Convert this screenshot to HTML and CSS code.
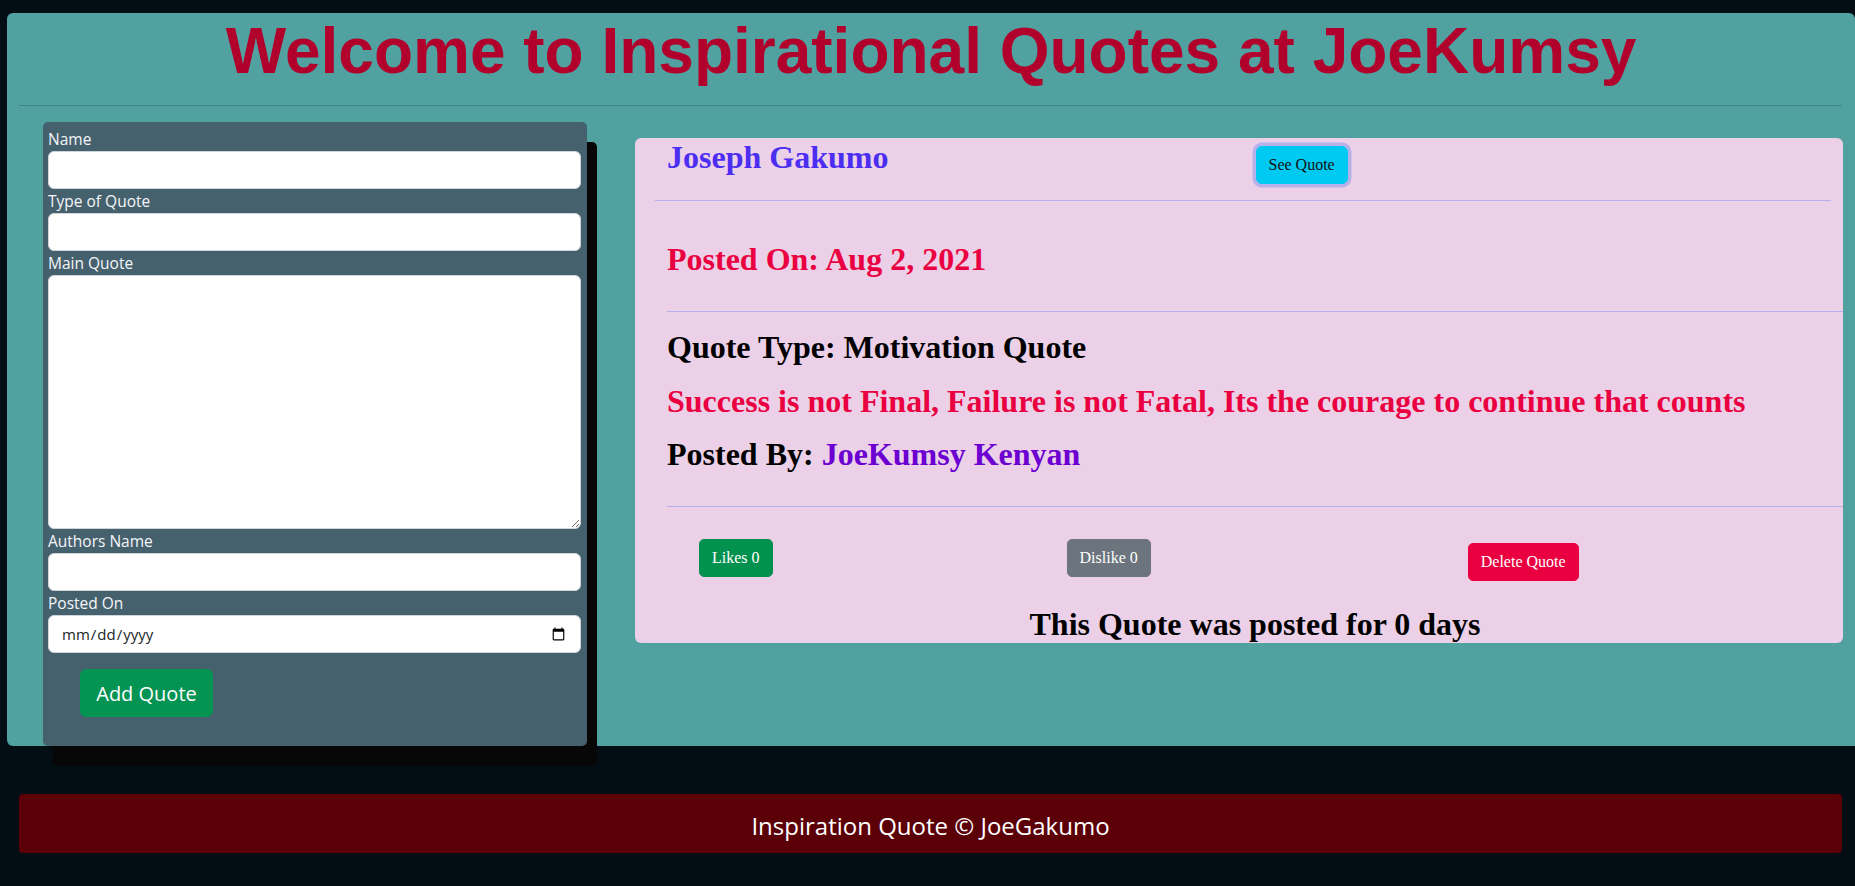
FILE: index.html
```html
<!DOCTYPE html>
<html lang="en">
<head>
<meta charset="utf-8">
<title>Inspirational Quotes</title>
<link rel="stylesheet" href="styles.css">
</head>
<body>
<div class="main">
  <h1 class="title">Welcome to Inspirational Quotes at JoeKumsy</h1>
  <hr class="top-rule">
  <div class="row">
    <form class="quote-form">
      <label class="lbl">Name</label>
      <input class="field" type="text">
      <label class="lbl">Type of Quote</label>
      <input class="field" type="text">
      <label class="lbl">Main Quote</label>
      <textarea class="field area"></textarea>
      <label class="lbl">Authors Name</label>
      <input class="field" type="text">
      <label class="lbl">Posted On</label>
      <input class="field date" type="date">
      <button class="add-btn" type="button">Add Quote</button>
    </form>
    <div class="quote-card">
      <div class="card-head">
        <div class="half"><h2 class="author">Joseph Gakumo</h2></div>
        <div class="half"><button class="see-btn" type="button">See Quote</button></div>
      </div>
      <hr class="rule head-rule">
      <div class="card-body">
        <h2 class="posted">Posted On: Aug 2, 2021</h2>
        <hr class="rule body-rule">
        <h2 class="line">Quote Type: Motivation Quote</h2>
        <h2 class="line red">Success is not Final, Failure is not Fatal, Its the courage to continue that counts</h2>
        <h2 class="line last">Posted By: <span class="purple">JoeKumsy Kenyan</span></h2>
        <hr class="rule body-rule">
        <div class="actions">
          <button class="act like" type="button">Likes 0</button>
          <button class="act dislike" type="button">Dislike 0</button>
          <button class="act delete" type="button">Delete Quote</button>
        </div>
        <h2 class="days">This Quote was posted for 0 days</h2>
      </div>
    </div>
  </div>
</div>
<footer class="footer">Inspiration Quote © JoeGakumo</footer>
</body>
</html>
```

FILE: styles.css
```css
* { box-sizing: border-box; }

body {
  margin: 0;
  padding-top: 13px;
  background: #020e14;
  font-family: "Open Sans", "Noto Sans", sans-serif;
  min-height: 886px;
}

.main {
  margin-left: 7px;
  background: #52a1a1;
  border-radius: 6px 6px 0 6px;
}

.title {
  margin: 0;
  text-align: center;
  font-family: "Liberation Sans", Arial, sans-serif;
  font-weight: 700;
  font-size: 64px;
  line-height: 77px;
  color: #b0002b;
}

.top-rule {
  margin: 15px 13px 16px 12px;
  border: 0;
  border-top: 1px solid #3f8485;
}

.row {
  display: flex;
  align-items: flex-start;
}

.quote-form {
  margin: 0 0 0 36px;
  width: 544px;
  flex: none;
  background: #46616e;
  border-radius: 5px;
  padding: 5px 6px 29px 5px;
  box-shadow: 10px 20px 0 0 #070707;
  display: flex;
  flex-direction: column;
  align-items: flex-start;
}

.lbl {
  font-size: 15.5px;
  line-height: 24px;
  color: #f4f6f8;
}

.field {
  width: 100%;
  height: 38px;
  border: 1px solid #ced4da;
  border-radius: 6px;
  background: #fff;
  padding: 6px 12px;
  font-family: "Open Sans", sans-serif;
  font-size: 15px;
  color: #212529;
  margin: 0;
}

.area {
  height: 254px;
  resize: vertical;
}

.add-btn {
  margin: 16px 0 0 32px;
  height: 48px;
  width: 133px;
  padding: 0;
  border: 1px solid #039353;
  background: #039353;
  color: #fff;
  border-radius: 6px;
  font-family: "Open Sans", sans-serif;
  font-size: 20px;
}

.quote-card {
  flex: 1;
  margin: 16px 12px 0 48px;
  background: #ebd0e8;
  border-radius: 6px;
  font-family: "Liberation Serif", "Times New Roman", serif;
  overflow: hidden;
}

.card-head {
  display: flex;
  padding: 0 11px 0 20px;
}

.half {
  flex: 1 1 0;
  padding-left: 12px;
}

h2 {
  margin: 0;
  font-size: 32px;
  line-height: 38.4px;
  font-weight: 700;
}

.author {
  color: #4b2ef2;
  margin-bottom: 8px;
}

.see-btn {
  margin-top: 8px;
  height: 38px;
  padding: 0 12px;
  background: #00caf1;
  border: 1px solid #00caf1;
  border-radius: 6px;
  box-shadow: 0 0 0 3.5px #b6b1ea;
  font-family: "Liberation Serif", serif;
  font-size: 16px;
  color: #111;
}

.rule {
  border: 0;
  border-top: 1px solid #b4b0ec;
  margin: 0;
}

.head-rule {
  margin: 16px 12px 0 20px;
}

.card-body {
  padding-left: 32px;
}

.posted {
  color: #ea0041;
  margin-top: 39px;
}

.body-rule {
  margin: 32px 0 16px;
}

.line {
  color: #000;
  margin-bottom: 15.3px;
}

.line.last { margin-bottom: 0; }

.red { color: #ea0041; }
.purple { color: #6b00d1; }

.actions {
  display: flex;
  align-items: flex-start;
  margin-top: 32px;
}

.act {
  height: 38px;
  padding: 0 12px;
  border-radius: 5px;
  font-family: "Liberation Serif", serif;
  font-size: 16px;
  color: #fff;
}

.like {
  margin-left: 32px;
  background: #03914f;
  border: 1px solid #03914f;
}

.dislike {
  margin-left: 294px;
  background: #6c757d;
  border: 1px solid #6c757d;
}

.delete {
  margin-left: 317px;
  margin-top: 4px;
  background: #ea0041;
  border: 1px solid #ea0041;
}

.days {
  margin-top: 24px;
  text-align: center;
  color: #000;
}

.footer {
  margin: 48px 13px 0 19px;
  height: 59px;
  padding-top: 17px;
  background: #5c0008;
  border-radius: 4px;
  color: #fff;
  text-align: center;
  font-size: 24px;
  font-weight: 500;
  line-height: 30px;
}
```
